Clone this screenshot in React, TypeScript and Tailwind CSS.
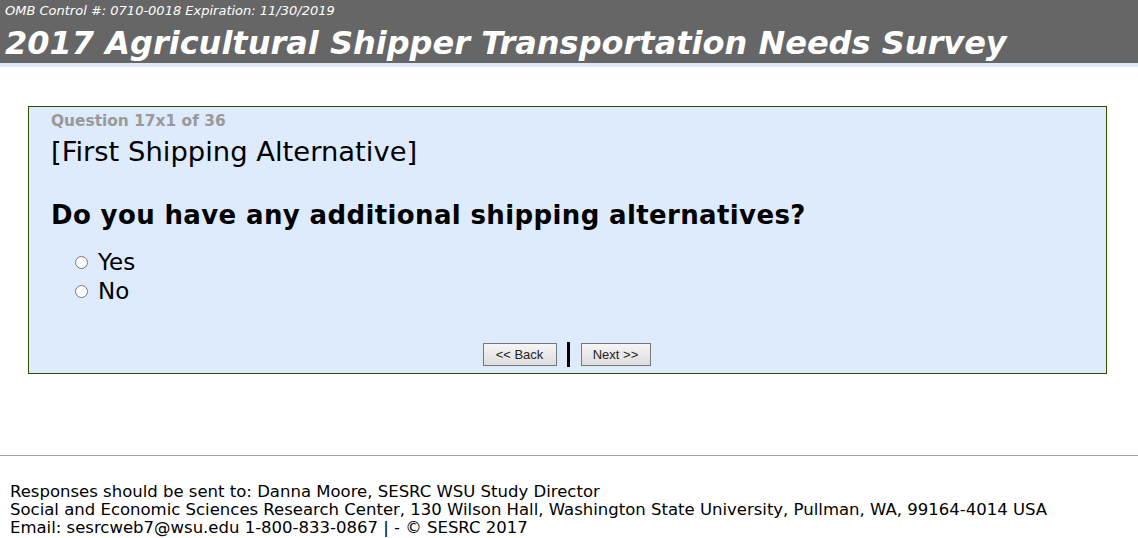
export default function App() {
  return (
    <div className="min-h-[538px] bg-white font-['DejaVu_Sans',Verdana,sans-serif] text-black">
      <header className="bg-[#666666] px-[5px] pt-[3px] h-[67px] text-white border-b-[4px] border-[#dde9f8]">
        <div className="text-[13px] italic leading-[16px]">OMB Control #: 0710-0018 Expiration: 11/30/2019</div>
        <h1 className="mt-[4px] text-[32px] font-bold italic leading-[40px]">
          2017 Agricultural Shipper Transportation Needs Survey
        </h1>
      </header>

      <main className="pt-[39px] pl-[28px] pr-[31px]">
        <section className="border border-[#2f4f00] bg-[#ddebfc] pl-[22px] pr-[24px] pt-[5px] pb-[6px]">
          <div className="text-[15.4px] font-bold leading-[18px] text-[#999999]">
            Question 17x1 of 36
          </div>
          <div className="mt-[6px] text-[27.4px] leading-[32px]">[First Shipping Alternative]</div>
          <h2 className="mt-[31px] text-[26px] font-bold leading-[32px] tracking-[0.37px]">
            Do you have any additional shipping alternatives?
          </h2>
          <div className="mt-[17px] pl-[24px] flex flex-col">
            <label className="flex items-center gap-[10px] text-[23px] leading-[29px]">
              <input type="radio" name="alt" className="w-[13px] h-[13px] m-0" />
              Yes
            </label>
            <label className="flex items-center gap-[10px] text-[23px] leading-[29px]">
              <input type="radio" name="alt" className="w-[13px] h-[13px] m-0" />
              No
            </label>
          </div>
          <div className="mt-[36px] flex items-center justify-center">
            <button className="w-[74px] h-[23px] border border-[#777] bg-gradient-to-b from-[#f6f6f6] to-[#dddddd] font-['Liberation_Sans',Arial,sans-serif] text-[13px] text-[#222]">
              &lt;&lt; Back
            </button>
            <span className="ml-[10px] mr-[11px] w-[3px] h-[25px] bg-black" />
            <button className="w-[70px] h-[23px] border border-[#777] bg-gradient-to-b from-[#f6f6f6] to-[#dddddd] font-['Liberation_Sans',Arial,sans-serif] text-[13px] text-[#222]">
              Next &gt;&gt;
            </button>
          </div>
        </section>
      </main>

      <footer className="mt-[81px] border-t border-[#a0a0a0]">
        <div className="pt-[27px] pl-[10px] text-[16.5px] leading-[18px]">
          <div>Responses should be sent to: Danna Moore, SESRC WSU Study Director</div>
          <div>Social and Economic Sciences Research Center, 130 Wilson Hall, Washington State University, Pullman, WA, 99164-4014 USA</div>
          <div>Email: sesrcweb7@wsu.edu 1-800-833-0867 | - © SESRC 2017</div>
        </div>
      </footer>
    </div>
  );
}
